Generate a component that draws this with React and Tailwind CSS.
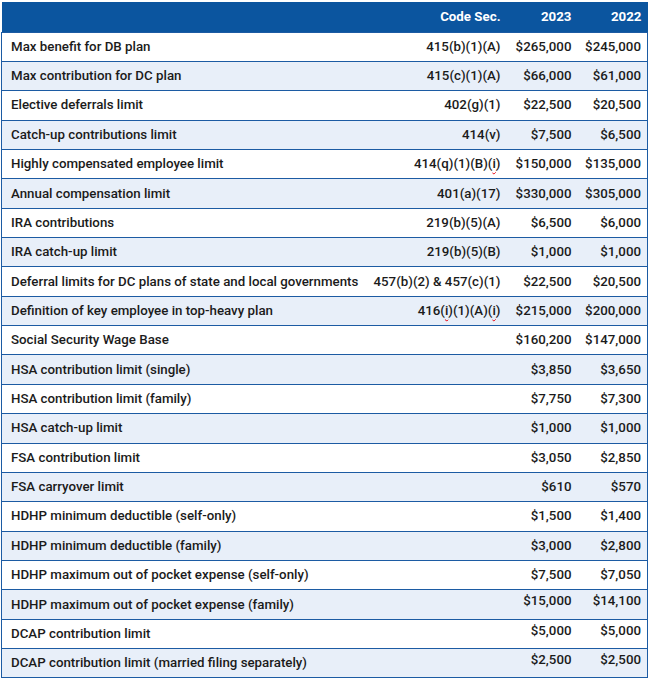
import React from "react";

const rows = [
    ["Max benefit for DB plan", "415(b)(1)(A)", "$265,000", "$245,000"],
    ["Max contribution for DC plan", "415(c)(1)(A)", "$66,000", "$61,000"],
    ["Elective deferrals limit", "402(g)(1)", "$22,500", "$20,500"],
    ["Catch-up contributions limit", "414(v)", "$7,500", "$6,500"],
    ["Highly compensated employee limit", "414(q)(1)(B)(~i~)", "$150,000", "$135,000"],
    ["Annual compensation limit", "401(a)(17)", "$330,000", "$305,000"],
    ["IRA contributions", "219(b)(5)(A)", "$6,500", "$6,000"],
    ["IRA catch-up limit", "219(b)(5)(B)", "$1,000", "$1,000"],
    ["Deferral limits for DC plans of state and local governments", "457(b)(2) & 457(c)(1)", "$22,500", "$20,500"],
    ["Definition of key employee in top-heavy plan", "416(~i~)(1)(A)(~i~)", "$215,000", "$200,000"],
    ["Social Security Wage Base", "", "$160,200", "$147,000"],
    ["HSA contribution limit (single)", "", "$3,850", "$3,650"],
    ["HSA contribution limit (family)", "", "$7,750", "$7,300"],
    ["HSA catch-up limit", "", "$1,000", "$1,000"],
    ["FSA contribution limit", "", "$3,050", "$2,850"],
    ["FSA carryover limit", "", "$610", "$570"],
    ["HDHP minimum deductible (self-only)", "", "$1,500", "$1,400"],
    ["HDHP minimum deductible (family)", "", "$3,000", "$2,800"],
    ["HDHP maximum out of pocket expense (self-only)", "", "$7,500", "$7,050"],
    ["HDHP maximum out of pocket expense (family)", "", "$15,000", "$14,100", true],
    ["DCAP contribution limit", "", "$5,000", "$5,000", true],
    ["DCAP contribution limit (married filing separately)", "", "$2,500", "$2,500", true],
];

// "~i~" marks the letters the browser flagged with a spell-check squiggle
function Code({ text }) {
    const parts = text.split("~");
    return parts.map((p, i) =>
        i % 2 === 1 ? (
            <span
                key={i}
                className="underline decoration-wavy decoration-red-600 decoration-1 underline-offset-2"
            >
                {p}
            </span>
        ) : (
            <span key={i}>{p}</span>
        ),
    );
}

export default function App() {
    return (
        <div className="bg-white w-[651px] h-[683px] pl-px pt-[2px] font-['Roboto',sans-serif] text-[13.3px] text-[#1b1b1b]">
            <table className="table-fixed border-collapse w-[646px]">
                <colgroup>
                    <col className="w-[365px]" />
                    <col className="w-[141px]" />
                    <col className="w-[71px]" />
                    <col className="w-[69px]" />
                </colgroup>
                <thead>
                    <tr className="bg-[#0b559f] text-white font-bold h-[30px]">
                        <th></th>
                        <th className="text-right pr-[7px]">Code Sec.</th>
                        <th className="text-right pr-[7px]">2023</th>
                        <th className="text-right pr-[6px]">2022</th>
                    </tr>
                </thead>
                <tbody className="border border-[#1c5ba3]">
                    {rows.map(([label, code, y23, y22, top], i) => (
                        <tr
                            key={label}
                            className={`h-[29.36px] border-t border-[#1c5ba3] font-medium ${
                                i % 2 === 1 ? "bg-[#e8eff9]" : "bg-white"
                            }`}
                        >
                            <td className="pl-[9px] whitespace-nowrap">{label}</td>
                            <td className="text-right pr-[7px] whitespace-nowrap">
                                <Code text={code} />
                            </td>
                            <td
                                className={`text-right pr-[7px] ${
                                    top ? "align-top pt-[1px]" : ""
                                }`}
                            >
                                {y23}
                            </td>
                            <td
                                className={`text-right pr-[6px] ${
                                    top ? "align-top pt-[1px]" : ""
                                }`}
                            >
                                {y22}
                            </td>
                        </tr>
                    ))}
                </tbody>
            </table>
        </div>
    );
}
